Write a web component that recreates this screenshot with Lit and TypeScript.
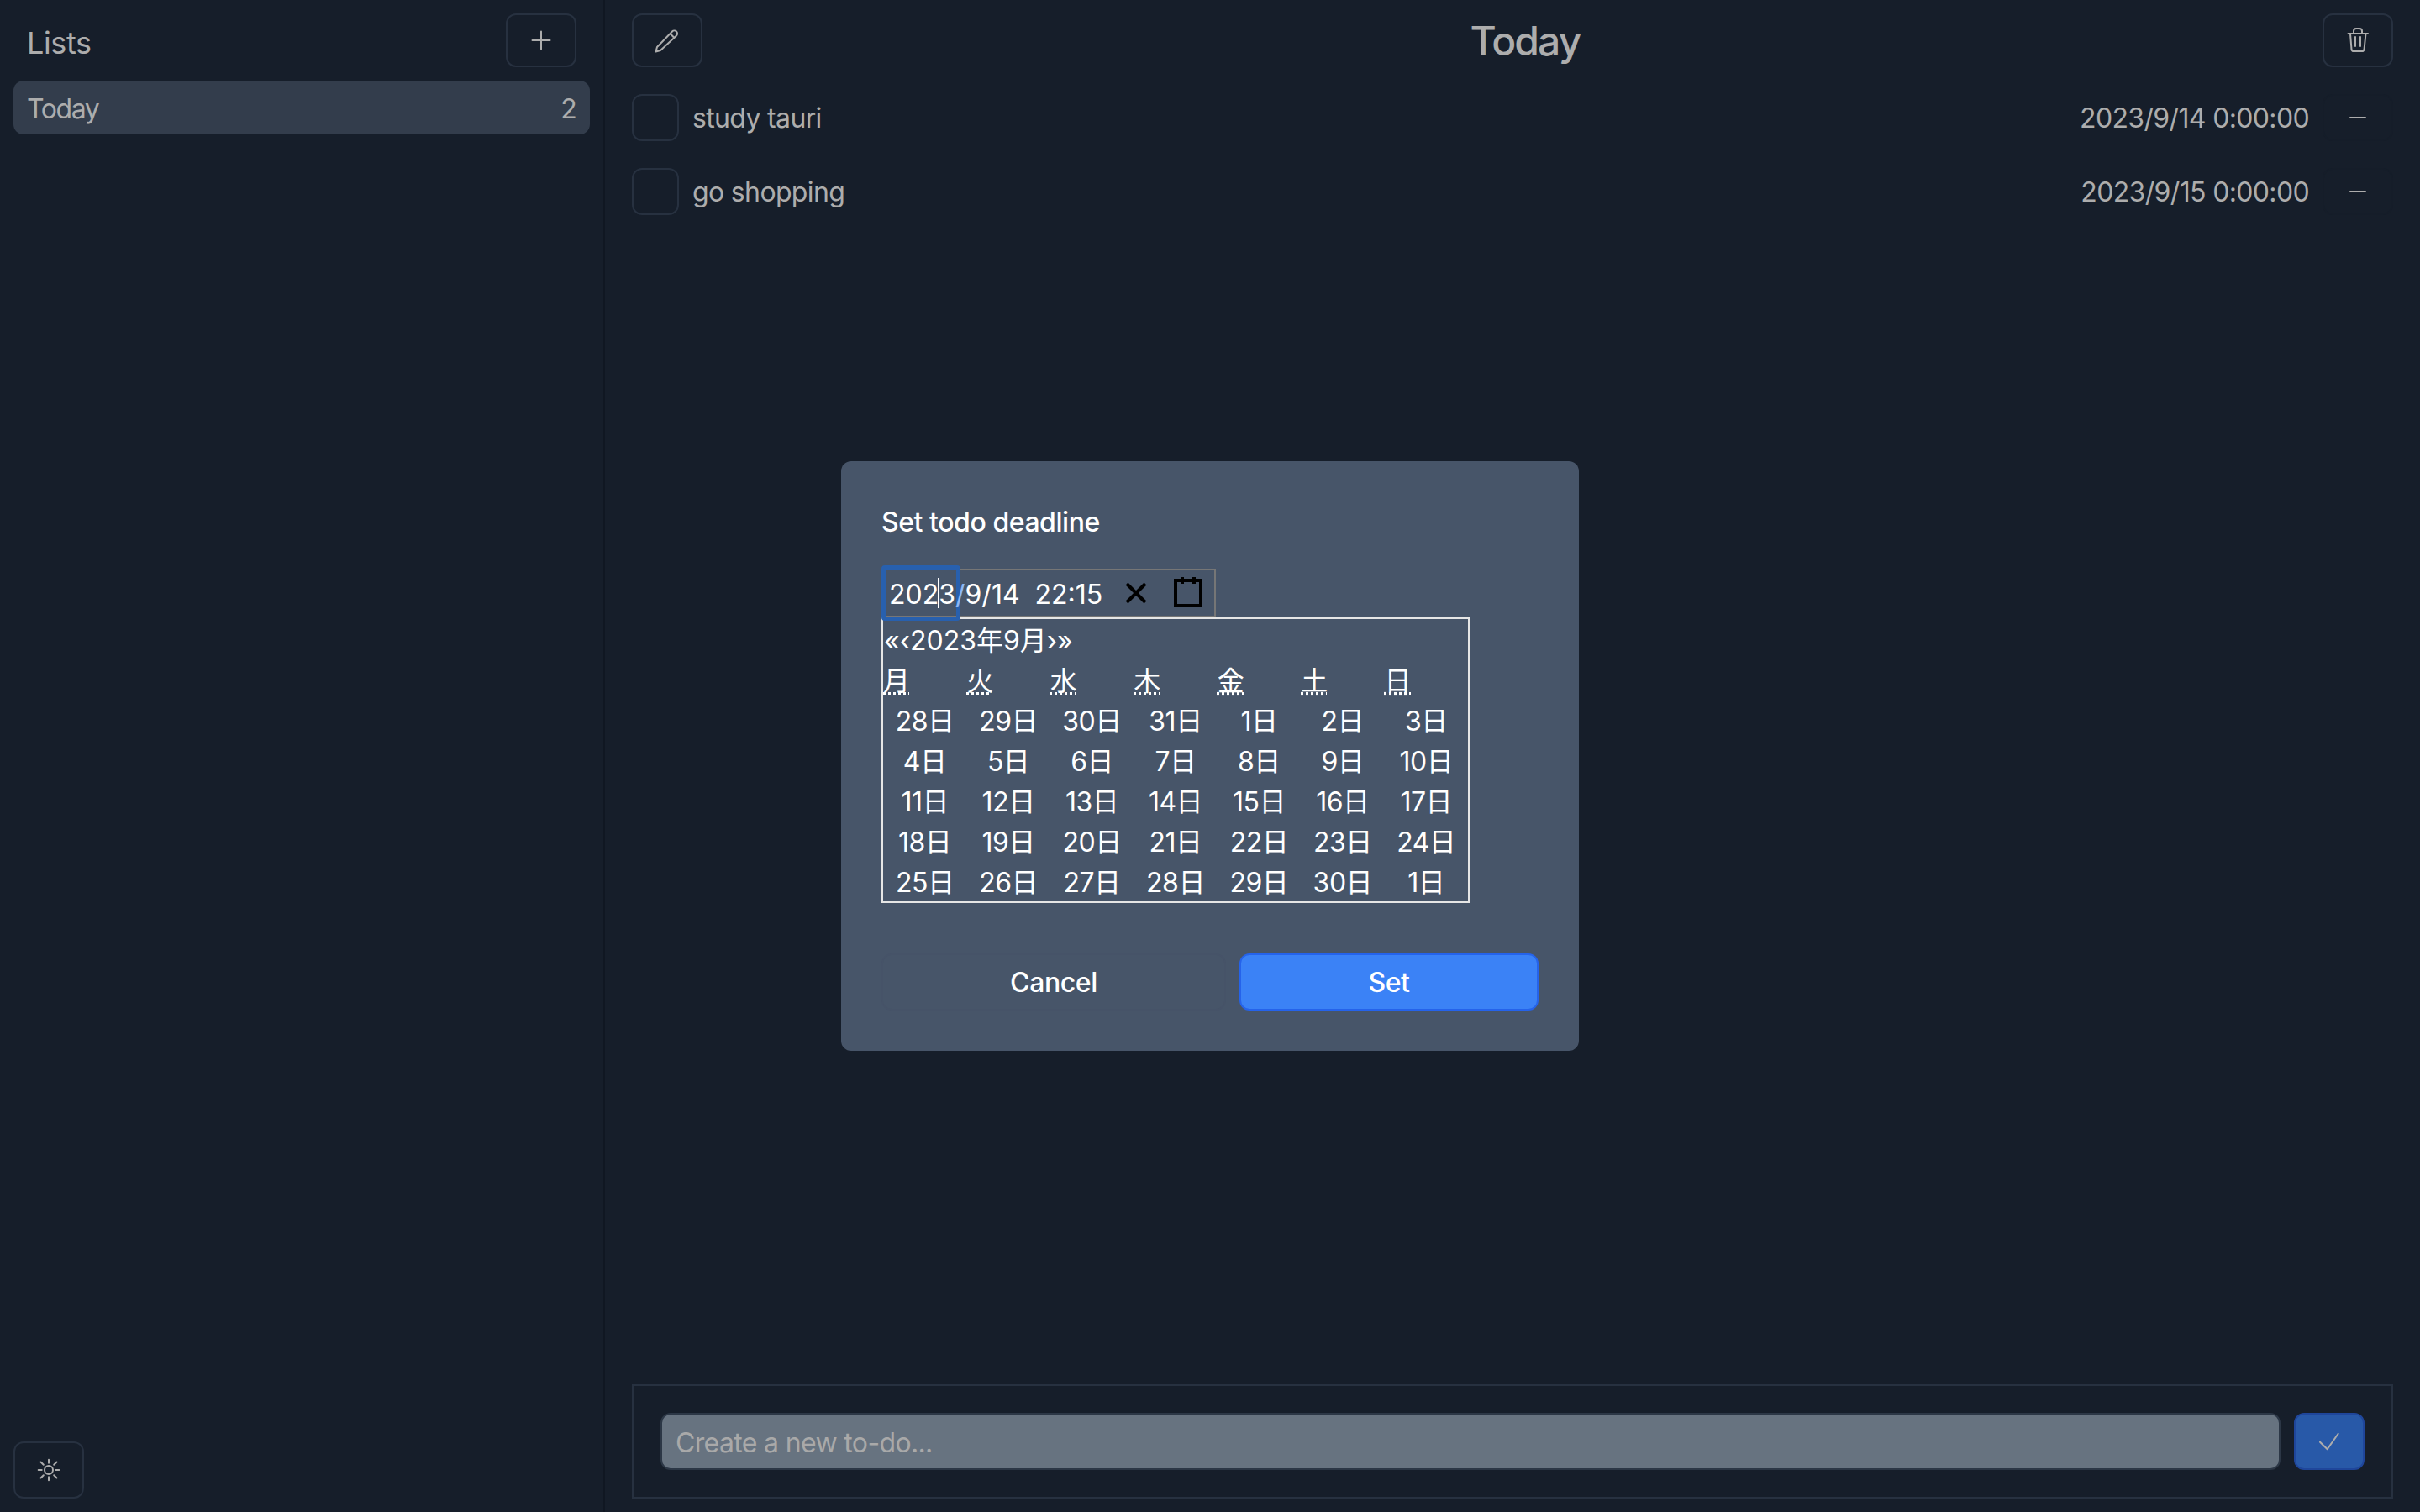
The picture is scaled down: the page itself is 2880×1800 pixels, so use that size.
import { LitElement, html, css, svg } from 'lit';
import { customElement } from 'lit/decorators.js';

const WEEKDAYS = ['月', '火', '水', '木', '金', '土', '日'];
const DAYS = [
    28, 29, 30, 31, 1, 2, 3,
    4, 5, 6, 7, 8, 9, 10,
    11, 12, 13, 14, 15, 16, 17,
    18, 19, 20, 21, 22, 23, 24,
    25, 26, 27, 28, 29, 30, 1,
];
const TODOS = [
    { title: 'study tauri', deadline: '2023/9/14 0:00:00' },
    { title: 'go shopping', deadline: '2023/9/15 0:00:00' },
];

const PLUS = svg`<path d="M16 5.5V26.5M5.5 16H26.5"></path>`;
const PENCIL = svg`<path d="M2.5 29.5L4 24L22 5.5A3.5 3.5 0 0 1 27 10.5L8 28ZM19.5 8L24.5 13"></path>`;
const TRASH = svg`<path d="M4.5 8H28M11 7.5V5A3 3 0 0 1 14 2H18A3 3 0 0 1 21 5V7.5M7 8L8.5 27A2.5 2.5 0 0 0 11 29H21A2.5 2.5 0 0 0 23.5 27L25.5 8M13 12V23M19 12V23"></path>`;
const MINUS = svg`<path d="M7 16H25"></path>`;
const CHECK = svg`<path d="M5 16.7L13.7 25.3L26.7 6.7"></path>`;
const SUN = svg`<circle cx="16" cy="16" r="5"></circle><path d="M16 3.7V7.7M16 24.3V28.3M3.7 16H7.7M24.3 16H28.3M6.5 6.5L9.8 9.8M22.2 22.2L25.5 25.5M6.5 25.5L9.8 22.2M22.2 9.8L25.5 6.5"></path>`;

@customElement('app-root')
export class AppRoot extends LitElement {
    static override styles = css`
        :host {
            display: block;
            height: 1800px;
            background: #161e2a;
            color: #adadad;
            font-family: Inter, "Noto Sans CJK JP", sans-serif;
            font-size: 32px;
            line-height: 48px;
            letter-spacing: -0.65px;
        }

        * { box-sizing: border-box; }

        .app { display: flex; height: 100%; }

        .sidebar {
            width: 720px;
            flex: none;
            display: flex;
            flex-direction: column;
            padding: 16px;
            border-right: 2px solid #101722;
        }

        .sidebar-head {
            display: flex;
            justify-content: space-between;
            align-items: center;
            padding: 0 16px;
            margin-bottom: 16px;
        }

        .sidebar-head span {
            padding-top: 6px;
            font-size: 36px;
            letter-spacing: -0.4px;
        }

        .ghost {
            width: 84px;
            height: 64px;
            display: flex;
            align-items: center;
            justify-content: center;
            border: 2px solid #273140;
            border-radius: 12px;
            flex: none;
        }

        .theme { height: 68px; margin-top: auto; }

        .list-item {
            display: flex;
            justify-content: space-between;
            align-items: center;
            height: 64px;
            padding: 3px 16px 0;
            border-radius: 12px;
            background: #333d4c;
        }

        .list-item .label { letter-spacing: -1.4px; }

        .main {
            flex: 1;
            min-width: 0;
            display: flex;
            flex-direction: column;
            padding: 16px 32px;
        }

        .title-row {
            display: flex;
            justify-content: space-between;
            align-items: center;
            margin-bottom: 32px;
        }

        .title-row h1 {
            margin: 0 0 0 30px;
            padding-top: 2px;
            font-size: 48px;
            font-weight: 500;
            line-height: 62px;
            letter-spacing: -1.9px;
        }

        .todos {
            flex: 1;
            display: flex;
            flex-direction: column;
            gap: 32px;
        }

        .todo {
            display: flex;
            align-items: center;
            height: 56px;
        }

        .check {
            width: 56px;
            height: 56px;
            margin-right: 16px;
            border: 2px solid #273140;
            border-radius: 12px;
        }

        .todo .name { flex: 1; padding-top: 2px; }

        .todo .deadline { padding-top: 2px; }

        .dash {
            width: 84px;
            height: 56px;
            margin-left: 16px;
            display: flex;
            align-items: center;
            justify-content: center;
            border: 2px solid #151d29;
            border-radius: 12px;
        }

        .composer {
            display: flex;
            align-items: center;
            gap: 16px;
            height: 136px;
            padding: 0 32px;
            border: 2px solid #273140;
        }

        .composer .field {
            flex: 1;
            height: 68px;
            padding: 3px 16px 0;
            display: flex;
            align-items: center;
            background: #677380;
            border: 2px solid #2c3746;
            border-radius: 12px;
            color: #a9a9a9;
        }

        .submit {
            width: 84px;
            height: 68px;
            display: flex;
            align-items: center;
            justify-content: center;
            background: #2859a8;
            border: 2px solid #1f469b;
            border-radius: 12px;
        }

        .overlay {
            position: fixed;
            inset: 0;
            display: flex;
            align-items: center;
            justify-content: center;
        }

        .modal {
            width: 878px;
            height: 702px;
            padding: 48px;
            background: #475569;
            border-radius: 12px;
            color: #fff;
        }

        .modal h2 {
            margin: 0;
            padding-top: 2px;
            font-size: 32px;
            font-weight: 500;
            line-height: 46px;
            letter-spacing: -0.45px;
        }

        .picker {
            position: relative;
            display: flex;
            align-items: center;
            width: 398px;
            height: 58px;
            margin-top: 32px;
            border: 2px solid #767676;
        }

        .date-text {
            position: relative;
            flex: 1;
            padding: 3px 0 0 7px;
            white-space: pre;
            letter-spacing: 0;
        }

        .date-text .sep { color: #8db8f5; }

        .picker .icon-btn {
            display: flex;
            padding: 8px 12px;
        }

        .focus {
            position: absolute;
            left: -2px;
            top: -6px;
            width: 94px;
            height: 66px;
            border: 5px solid #2860ae;
            border-radius: 4px;
        }

        .caret {
            position: absolute;
            left: 65px;
            top: 9px;
            width: 2px;
            height: 36px;
            background: #fff;
        }

        .calendar {
            width: 700px;
            border: 2px solid #e6e6e6;
            letter-spacing: -0.5px;
        }

        .nav {
            padding: 3px 0 0 1px;
            line-height: 45px;
            letter-spacing: 0;
            white-space: nowrap;
        }

        .weekdays, .days {
            display: grid;
            grid-template-columns: repeat(7, 1fr);
        }

        .weekdays span, .days span {
            padding-top: 3px;
            line-height: 45px;
        }

        .weekdays abbr { text-decoration: underline dotted; }

        .days span { text-align: center; }

        .actions {
            display: flex;
            gap: 16px;
            margin-top: 60px;
            letter-spacing: -0.4px;
        }

        .btn {
            height: 68px;
            padding-top: 2px;
            display: flex;
            align-items: center;
            justify-content: center;
            border-radius: 12px;
            font-weight: 500;
        }

        .cancel {
            width: 410px;
            border: 2px solid #465368;
        }

        .set {
            flex: 1;
            background: #3b82f6;
            border: 2px solid #2563eb;
        }

        svg { display: block; }
    `;

    private _icon(shape: unknown) {
        return html`<svg width="32" height="32" viewBox="0 0 32 32" fill="none" stroke="currentColor" stroke-width="2" stroke-linecap="round" stroke-linejoin="round">${shape}</svg>`;
    }

    private _renderTodo(t: { title: string; deadline: string }) {
        return html`
            <div class="todo">
                <div class="check"></div>
                <span class="name">${t.title}</span>
                <span class="deadline">${t.deadline}</span>
                <span class="dash">${this._icon(MINUS)}</span>
            </div>
        `;
    }

    override render() {
        return html`
            <div class="app">
                <aside class="sidebar">
                    <div class="sidebar-head">
                        <span>Lists</span>
                        <div class="ghost">${this._icon(PLUS)}</div>
                    </div>
                    <div class="list-item"><span class="label">Today</span><span>2</span></div>
                    <div class="ghost theme">${this._icon(SUN)}</div>
                </aside>
                <main class="main">
                    <div class="title-row">
                        <div class="ghost">${this._icon(PENCIL)}</div>
                        <h1>Today</h1>
                        <div class="ghost">${this._icon(TRASH)}</div>
                    </div>
                    <div class="todos">${TODOS.map((t) => this._renderTodo(t))}</div>
                    <div class="composer">
                        <div class="field">Create a new to-do...</div>
                        <div class="submit">${this._icon(CHECK)}</div>
                    </div>
                </main>
            </div>
            <div class="overlay">
                <div class="modal">
                    <h2>Set todo deadline</h2>
                    <div class="picker">
                        <span class="focus"></span>
                        <span class="date-text">2023<span class="sep">/</span>9/14  22:15</span>
                        <span class="caret"></span>
                        <span class="icon-btn">
                            <svg width="38" height="38" viewBox="0 0 19 19" stroke="black" stroke-width="2"><line x1="4" x2="15" y1="4" y2="15"></line><line x1="15" x2="4" y1="4" y2="15"></line></svg>
                        </span>
                        <span class="icon-btn">
                            <svg width="38" height="38" viewBox="0 0 19 19" stroke="black" stroke-width="2"><rect fill="none" height="15" width="15" x="2" y="2"></rect><line x1="6" x2="6" y1="0" y2="4"></line><line x1="13" x2="13" y1="0" y2="4"></line></svg>
                        </span>
                    </div>
                    <div class="calendar">
                        <div class="nav">«‹2023年9月›»</div>
                        <div class="weekdays">${WEEKDAYS.map((d) => html`<span><abbr>${d}</abbr></span>`)}</div>
                        <div class="days">${DAYS.map((d) => html`<span>${d}日</span>`)}</div>
                    </div>
                    <div class="actions">
                        <div class="btn cancel">Cancel</div>
                        <div class="btn set">Set</div>
                    </div>
                </div>
            </div>
        `;
    }
}
